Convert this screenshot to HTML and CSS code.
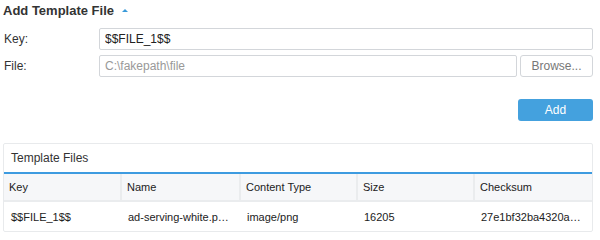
FILE: index.html
```html
<!DOCTYPE html>
<html lang="en">
<head>
  <meta charset="UTF-8" />
  <title>Add Template File</title>
  <link rel="stylesheet" href="styles.css">
</head>
<body>
  <div class="page">
    <h3 class="section-title">Add Template File <span class="caret"></span></h3>

    <div class="form-row">
      <label for="key">Key:</label>
      <input type="text" id="key" value="$$FILE_1$$" />
    </div>
    <div class="form-row">
      <label for="file">File:</label>
      <div class="file-group">
        <input type="text" id="file" class="file-name" value="C:\fakepath\file" readonly />
        <button class="btn-browse">Browse...</button>
      </div>
    </div>

    <div class="actions">
      <button class="btn-add">Add</button>
    </div>

    <div class="panel">
      <div class="panel-title">Template Files</div>
      <table class="files-table">
        <thead>
          <tr>
            <th class="c-key">Key</th>
            <th class="c-name">Name</th>
            <th class="c-type">Content Type</th>
            <th class="c-size">Size</th>
            <th class="c-sum">Checksum</th>
          </tr>
        </thead>
        <tbody>
          <tr>
            <td>$$FILE_1$$</td>
            <td>ad-serving-white.p…</td>
            <td>image/png</td>
            <td>16205</td>
            <td>27e1bf32ba4320a…</td>
          </tr>
        </tbody>
      </table>
    </div>
  </div>
</body>
</html>
```

FILE: styles.css
```css
body { margin: 0; font-family: "Liberation Sans", Arial, sans-serif; color: #333; background: #fff; }

.page { padding: 0 7px 0 3px; }

.section-title {
  margin: 0; height: 28px; line-height: 22px;
  font-size: 13px; font-weight: bold; color: #333;
}

.caret {
  display: inline-block; width: 0; height: 0; margin-left: 4px;
  border-left: 3px solid transparent; border-right: 3px solid transparent;
  border-bottom: 3px solid #3a9ad9; vertical-align: 3px;
}

.form-row {
  display: flex; align-items: center; margin-bottom: 5px;
}

.form-row label {
  width: 95px; flex: none; font-size: 12px; color: #333; padding-left: 1px;
}

.form-row input {
  flex: 1; height: 22px; box-sizing: border-box; margin: 0;
  border: 1px solid #d3d6da; border-radius: 2px;
  padding: 0 5px; font-family: inherit; font-size: 12px; color: #222;
}

.file-group { flex: 1; display: flex; gap: 3px; }

.form-row input.file-name { color: #999; }

.btn-browse {
  width: 73px; height: 22px; flex: none; margin: 0;
  background: #fff; border: 1px solid #d3d6da; border-radius: 3px;
  font-family: inherit; font-size: 12px; color: #777;
}

.actions { display: flex; justify-content: flex-end; margin-top: 22px; }

.btn-add {
  width: 75px; height: 22px; margin: 0;
  background: #44a1de; color: #fff; border: none; border-radius: 3px;
  font-family: inherit; font-size: 12px;
}

.panel {
  margin-top: 22px; border: 1px solid #e8eaec; border-radius: 2px;
}

.panel-title {
  height: 28px; line-height: 28px; padding-left: 7px;
  font-size: 12px; color: #333;
  border-bottom: 2px solid #3d9be0;
}

.files-table { width: 100%; border-collapse: collapse; font-size: 11px; }

.files-table th {
  height: 26px; padding: 0 5px; text-align: left; font-weight: normal;
  background: #f6f7f9; color: #222;
  border-right: 2px solid #eaecee; border-bottom: 2px solid #eaecee;
}

.files-table th:last-child { border-right: none; }

.files-table td {
  height: 29px; padding: 0 7px; color: #222; white-space: nowrap;
}

.c-key { width: 106px; }
.c-name { width: 107px; }
.c-type { width: 105px; }
.c-size { width: 105px; }
```
